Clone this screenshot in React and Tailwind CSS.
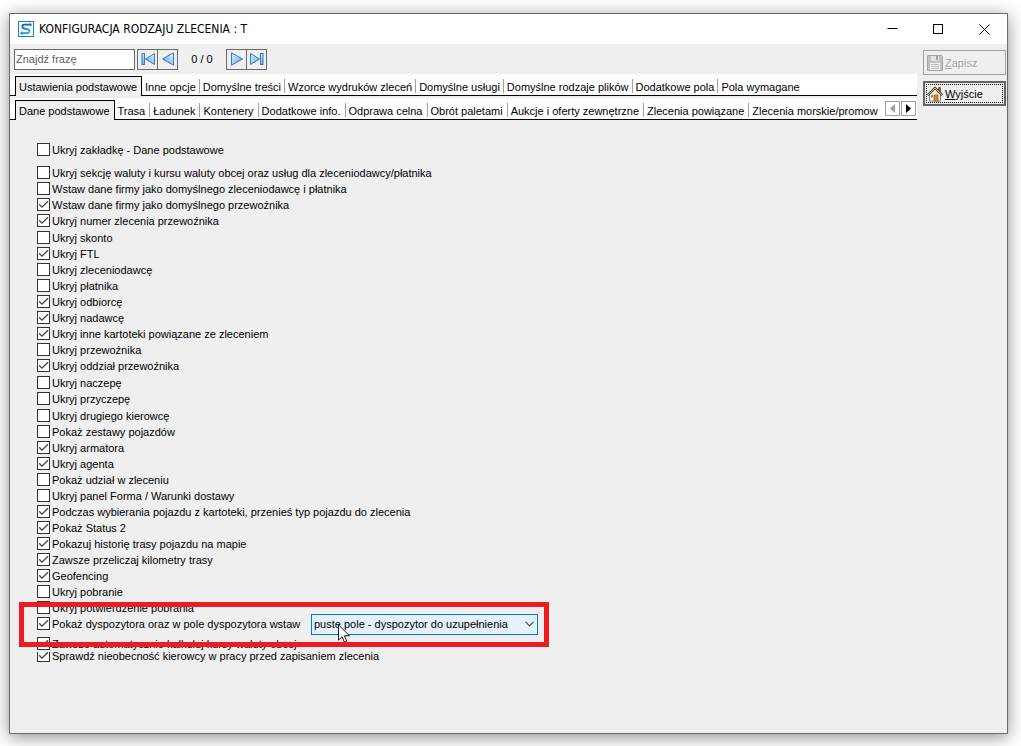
import React, { useState } from "react";

const mainTabs = [
    "Ustawienia podstawowe",
    "Inne opcje",
    "Domyślne treści",
    "Wzorce wydruków zleceń",
    "Domyślne usługi",
    "Domyślne rodzaje plików",
    "Dodatkowe pola",
    "Pola wymagane",
];

const subTabs = [
    "Dane podstawowe",
    "Trasa",
    "Ładunek",
    "Kontenery",
    "Dodatkowe info.",
    "Odprawa celna",
    "Obrót paletami",
    "Aukcje i oferty zewnętrzne",
    "Zlecenia powiązane",
    "Zlecenia morskie/promow",
];

const optionGroups = [
    [
        ["Ukryj sekcję waluty i kursu waluty obcej oraz usług dla zleceniodawcy/płatnika", false],
        ["Wstaw dane firmy jako domyślnego zleceniodawcę i płatnika", false],
        ["Wstaw dane firmy jako domyślnego przewoźnika", true],
        ["Ukryj numer zlecenia przewoźnika", true],
    ],
    [
        ["Ukryj skonto", false],
        ["Ukryj FTL", true],
        ["Ukryj zleceniodawcę", false],
        ["Ukryj płatnika", false],
        ["Ukryj odbiorcę", true],
        ["Ukryj nadawcę", true],
        ["Ukryj inne kartoteki powiązane ze zleceniem", true],
        ["Ukryj przewoźnika", false],
        ["Ukryj oddział przewoźnika", true],
    ],
    [
        ["Ukryj naczepę", false],
        ["Ukryj przyczepę", false],
    ],
    [
        ["Ukryj drugiego kierowcę", false],
        ["Pokaż zestawy pojazdów", false],
        ["Ukryj armatora", true],
        ["Ukryj agenta", true],
        ["Pokaż udział w zleceniu", false],
        ["Ukryj panel Forma / Warunki dostawy", false],
        ["Podczas wybierania pojazdu z kartoteki, przenieś typ pojazdu do zlecenia", true],
        ["Pokaż Status 2", true],
        ["Pokazuj historię trasy pojazdu na mapie", true],
        ["Zawsze przeliczaj kilometry trasy", true],
        ["Geofencing", true],
        ["Ukryj pobranie", false],
        ["Ukryj potwierdzenie pobrania", false],
    ],
];

const Option = ({ label, checked }) => (
    <label className="flex h-4 w-fit items-start gap-[2px] whitespace-nowrap">
        <span className="mt-px grid size-[13px] shrink-0">
            <input
                type="checkbox"
                defaultChecked={checked}
                className="peer col-start-1 row-start-1 size-[13px] appearance-none border border-[#333333] bg-white"
            />
            <svg
                viewBox="0 0 13 13"
                className="pointer-events-none invisible col-start-1 row-start-1 size-[13px] peer-checked:visible"
            >
                <path d="M2.2 6.3 5 9.1 11 3.2" fill="none" stroke="#404040" strokeWidth="1.3" />
            </svg>
        </span>
        {label}
    </label>
);

const TabBar = ({ tabs, tabClass, children }) => {
    const [active, setActive] = useState(0);

    return (
        <div className="flex h-[22px] border-b border-black bg-white">
            <div role="tablist" className="-mb-px flex min-w-0 flex-1 overflow-hidden pt-[2px] pl-[5px]">
                {tabs.map((tab, i) => (
                    <button
                        key={tab}
                        role="tab"
                        aria-selected={i === active}
                        onClick={() => setActive(i)}
                        className={
                            i === active
                                ? "shrink-0 border border-b-0 border-black bg-[#efefef] pr-1 pl-[3px] whitespace-nowrap"
                                : `my-[3px] shrink-0 border-r border-[#a0a0a0] pl-[3px] whitespace-nowrap last:border-r-0 last:pr-0 ${tabClass}`
                        }
                    >
                        {tab}
                    </button>
                ))}
            </div>
            {children}
        </div>
    );
};

const Blues = () => (
    <defs>
        <linearGradient id="blue" x1="0" y1="0" x2="1" y2="1">
            <stop offset="0" stopColor="#e4f2fd" />
            <stop offset="0.5" stopColor="#9fcdf5" />
            <stop offset="1" stopColor="#3f8ee0" />
        </linearGradient>
    </defs>
);

const NavButton = ({ label, flip, bar }) => (
    <button
        aria-label={label}
        className="-ml-px flex h-[21px] w-[21px] items-center justify-center border border-[#6b6b6b] first:ml-0"
    >
        <svg viewBox="0 0 16 16" className={flip ? "size-4 shrink-0 -scale-x-100" : "size-4 shrink-0"}>
            <Blues />
            <path
                d={bar ? "M1.5 2.5 10.5 8 1.5 13.5Z" : "M2.5 1.8 13.5 8 2.5 14.2Z"}
                fill="url(#blue)"
                stroke="#3b78c4"
                strokeLinejoin="round"
            />
            {bar && <rect x="11.5" y="2.5" width="2.5" height="11" fill="url(#blue)" stroke="#3b78c4" />}
        </svg>
    </button>
);

const AppIcon = () => (
    <svg viewBox="0 0 16 16" className="size-4">
        <rect x="0.5" y="0.5" width="15" height="15" fill="#f4fbff" stroke="#1a86bd" />
        <path d="M12 3.7H6.4c-2.6 0-2.8 3.2-.4 3.7l3.6.8" fill="none" stroke="#2a5f9e" strokeWidth="1.8" />
        <path d="M6 7.5l3.8.8c2.4.6 2 3.9-.5 3.9H4" fill="none" stroke="#27a3d8" strokeWidth="1.8" />
        <path d="M11.5 1.6 14.2 3.7 11.5 5.8ZM4.5 10.1 1.8 12.2l2.7 2.1Z" fill="#2a8cc8" />
    </svg>
);

const DiskIcon = () => (
    <svg viewBox="0 0 16 16" className="size-4 shrink-0">
        <path d="M0.5 0.5h14l1 1v14H0.5Z" fill="#c2c2c2" stroke="#a3a3a3" />
        <rect x="4" y="1" width="8" height="5" fill="#e4e4e4" />
        <rect x="9" y="1" width="2" height="4" fill="#9c9c9c" />
        <rect x="3" y="8" width="10" height="7" fill="#f3f3f3" />
        <path d="M4 9.5h8M4 11.5h8M4 13.5h8" stroke="#bcbcbc" />
    </svg>
);

const HouseIcon = () => (
    <svg viewBox="0 0 16 16" className="size-4 shrink-0">
        <path d="M11.5 1.5h2V6l-2-2Z" fill="#b5523b" stroke="#5d3326" strokeWidth="0.6" />
        <path d="M2.5 8 8 2.8 13.5 8v7h-11Z" fill="#f4f1e4" stroke="#6a6a6a" strokeWidth="0.8" />
        <path d="M0.8 9.2 8 2l7.2 7.2" fill="none" stroke="#4c4336" strokeWidth="2.4" />
        <path d="M1 8.9 8 2l7 6.9" fill="none" stroke="#e4b766" strokeWidth="1" />
        <rect x="7" y="9" width="4" height="6" fill="#d08b1c" stroke="#8d5a10" strokeWidth="0.7" />
        <rect x="4" y="9" width="2" height="2.5" fill="#5d9bd6" />
    </svg>
);

const TitleBar = () => (
    <header className="flex h-[30px] items-center bg-white pl-2">
        <AppIcon />
        <h1 className="flex-1 pl-[5px] font-['DejaVu_Sans_Condensed',sans-serif] text-xs">
            KONFIGURACJA RODZAJU ZLECENIA : T
        </h1>
        <button aria-label="Minimalizuj" className="flex h-full w-[46px] items-center justify-center">
            <svg viewBox="0 0 11 11" className="size-[11px]">
                <path d="M0.5 4.5h10" stroke="#000" />
            </svg>
        </button>
        <button aria-label="Maksymalizuj" className="flex h-full w-[46px] items-center justify-center">
            <svg viewBox="0 0 11 11" className="size-[11px]">
                <rect x="0.5" y="0.5" width="9" height="9" fill="none" stroke="#000" />
            </svg>
        </button>
        <button aria-label="Zamknij" className="flex h-full w-[46px] items-center justify-center">
            <svg viewBox="0 0 11 11" className="size-[11px]">
                <path d="M0.5 0.5l10 10M10.5 0.5l-10 10" stroke="#000" />
            </svg>
        </button>
    </header>
);

const Toolbar = () => (
    <div className="flex h-[30px] items-center pl-1">
        <input
            type="text"
            aria-label="Znajdź frazę"
            placeholder="Znajdź frazę"
            className="h-[21px] w-[121px] border border-[#6b6b6b] bg-white px-px placeholder:text-[#606060]"
        />
        <div className="ml-[2px] flex">
            <NavButton label="Pierwszy" flip bar />
            <NavButton label="Poprzedni" flip />
        </div>
        <span className="w-12 text-center">0 / 0</span>
        <div className="flex">
            <NavButton label="Następny" />
            <NavButton label="Ostatni" bar />
        </div>
    </div>
);

const DispatcherOption = () => (
    <div className="relative flex h-4 w-fit items-center">
        <div className="w-[274px]">
            <Option label="Pokaż dyspozytora oraz w pole dyspozytora wstaw" checked />
        </div>
        <div className="relative z-20 -my-1 flex items-center">
            <select
                aria-label="Dyspozytor"
                className="h-[21px] w-[227px] appearance-none border border-[#0078d7] bg-[#e5f1fb] pl-[2px]"
            >
                <option>puste pole - dyspozytor do uzupełnienia</option>
            </select>
            <svg viewBox="0 0 9 6" className="pointer-events-none absolute right-1 h-[6px] w-[9px]">
                <path d="M0.5 0.8 4.5 4.8 8.5 0.8" fill="none" stroke="#404040" strokeWidth="1.1" />
            </svg>
        </div>
        {/* marked area and mouse pointer */}
        <svg viewBox="0 0 12 19" className="pointer-events-none absolute top-2 left-[301px] z-20 h-[19px] w-3">
            <path
                d="M0.5 0.8v15.4l3.6-3.5 2.4 5.5 2.3-1-2.4-5.4h5Z"
                fill="#fff"
                stroke="#000"
                strokeWidth="0.9"
            />
        </svg>
        <div className="pointer-events-none absolute -top-[14px] -left-[18px] z-30 h-[45px] w-[530px] border-[5px] border-[#ed1c24]"></div>
    </div>
);

const App = () => {
    return (
        <div className="flex min-h-screen bg-white pt-[13px] pr-[13px] pb-3 pl-[9px] font-['Liberation_Sans',sans-serif] text-[11px] leading-4 text-black">
            <div className="flex min-w-0 flex-1 flex-col border border-[#6b6b6b] bg-[#efefef] shadow-[0_3px_16px_rgba(0,0,0,0.45)]">
                <TitleBar />
                <div className="flex flex-1">
                    <main className="min-w-0 flex-1">
                        <Toolbar />
                        <div className="flex flex-col gap-[2px]">
                            <TabBar tabs={mainTabs} tabClass="pr-[3px]" />
                            <TabBar tabs={subTabs} tabClass="pr-1">
                                <div className="flex items-center gap-px pr-px pl-1">
                                    <button
                                        aria-label="Przewiń w lewo"
                                        className="flex size-[15px] items-center justify-center border border-[#a0a0a0]"
                                    >
                                        <svg viewBox="0 0 5 9" className="h-[9px] w-[5px]">
                                            <path d="M5 0v9L0 4.5Z" fill="#a0a0a0" />
                                        </svg>
                                    </button>
                                    <button
                                        aria-label="Przewiń w prawo"
                                        className="flex size-[15px] items-center justify-center border border-[#a0a0a0]"
                                    >
                                        <svg viewBox="0 0 5 9" className="h-[9px] w-[5px]">
                                            <path d="M0 0v9L5 4.5Z" fill="#000" />
                                        </svg>
                                    </button>
                                </div>
                            </TabBar>
                        </div>
                        <div className="pt-[22px] pl-[27px]">
                            <Option label="Ukryj zakładkę - Dane podstawowe" />
                            <div className="mt-[7px] flex flex-col gap-px">
                                {optionGroups.map((group) => (
                                    <div key={group[0][0]}>
                                        {group.map(([label, checked]) => (
                                            <Option key={label} label={label} checked={checked} />
                                        ))}
                                    </div>
                                ))}
                            </div>
                            <DispatcherOption />
                            <div className="relative z-10 mt-1 w-fit bg-[#efefef]">
                                <Option label="Zawsze automatycznie kalkuluj kursy waluty obcej" checked />
                            </div>
                            <div className="-mt-1">
                                <Option label="Sprawdź nieobecność kierowcy w pracy przed zapisaniem zlecenia" checked />
                            </div>
                        </div>
                    </main>
                    <aside className="flex w-[90px] flex-col gap-[6px] pt-[6px] pr-px pl-[6px]">
                        <button
                            disabled
                            className="flex h-[25px] items-center gap-[2px] border border-[#a0a0a0] pl-[3px] text-[#a0a0a0] text-shadow-[1px_1px_0_#ffffff]"
                        >
                            <DiskIcon />
                            <span>
                                <u>Z</u>apisz
                            </span>
                        </button>
                        <button className="h-[25px] border-2 border-[#666666] p-px">
                            <span className="flex h-full items-center gap-[2px] border border-dotted border-black">
                                <HouseIcon />
                                <span>
                                    <u>W</u>yjście
                                </span>
                            </span>
                        </button>
                    </aside>
                </div>
            </div>
        </div>
    );
};

export default App;
